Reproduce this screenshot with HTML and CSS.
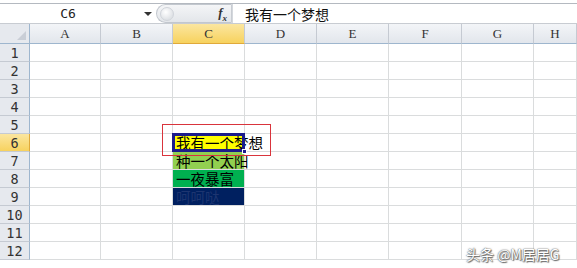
FILE: index.html
```html
<!DOCTYPE html>
<html>
<head>
<meta charset="utf-8">
<link rel="stylesheet" href="styles.css">
</head>
<body>
<div class="app">
  <div class="fbar">
    <div class="namebox"><span class="nb-text">C6</span><span class="arrow"></span></div>
    <div class="pill"><span class="knob"></span><span class="fx">f<sub>x</sub></span></div>
    <div class="formula">我有一个梦想</div>
  </div>
  <div class="sheet">
    <div class="corner"><span class="tri"></span></div>
    <div class="ch">A</div><div class="ch">B</div><div class="ch sel">C</div><div class="ch">D</div><div class="ch">E</div><div class="ch">F</div><div class="ch">G</div><div class="ch">H</div>

    <div class="rh">1</div><div class="c"></div><div class="c"></div><div class="c"></div><div class="c"></div><div class="c"></div><div class="c"></div><div class="c"></div><div class="c"></div>
    <div class="rh">2</div><div class="c"></div><div class="c"></div><div class="c"></div><div class="c"></div><div class="c"></div><div class="c"></div><div class="c"></div><div class="c"></div>
    <div class="rh">3</div><div class="c"></div><div class="c"></div><div class="c"></div><div class="c"></div><div class="c"></div><div class="c"></div><div class="c"></div><div class="c"></div>
    <div class="rh">4</div><div class="c"></div><div class="c"></div><div class="c"></div><div class="c"></div><div class="c"></div><div class="c"></div><div class="c"></div><div class="c"></div>
    <div class="rh">5</div><div class="c"></div><div class="c"></div><div class="c"></div><div class="c"></div><div class="c"></div><div class="c"></div><div class="c"></div><div class="c"></div>
    <div class="rh sel">6</div><div class="c"></div><div class="c"></div><div class="c yellow active"><span class="txt">我有一个梦想</span><span class="handle"></span><span class="redbox"></span></div><div class="c"></div><div class="c"></div><div class="c"></div><div class="c"></div><div class="c"></div>
    <div class="rh">7</div><div class="c"></div><div class="c"></div><div class="c lgreen"><span class="txt">种一个太阳</span></div><div class="c"></div><div class="c"></div><div class="c"></div><div class="c"></div><div class="c"></div>
    <div class="rh">8</div><div class="c"></div><div class="c"></div><div class="c green"><span class="txt">一夜暴富</span></div><div class="c"></div><div class="c"></div><div class="c"></div><div class="c"></div><div class="c"></div>
    <div class="rh">9</div><div class="c"></div><div class="c"></div><div class="c navy"><span class="txt">呵呵哒</span></div><div class="c"></div><div class="c"></div><div class="c"></div><div class="c"></div><div class="c"></div>
    <div class="rh">10</div><div class="c"></div><div class="c"></div><div class="c"></div><div class="c"></div><div class="c"></div><div class="c"></div><div class="c"></div><div class="c"></div>
    <div class="rh">11</div><div class="c"></div><div class="c"></div><div class="c"></div><div class="c"></div><div class="c"></div><div class="c"></div><div class="c"></div><div class="c"></div>
    <div class="rh">12</div><div class="c"></div><div class="c"></div><div class="c"></div><div class="c"></div><div class="c"></div><div class="c"></div><div class="c"></div><div class="c"></div>
  </div>
  <div class="watermark">头条 @M居居G</div>
</div>
</body>
</html>
```
FILE: styles.css
```css
* { box-sizing: border-box; }
html, body { margin: 0; padding: 0; background: #fff; }
body { width: 577px; height: 268px; overflow: hidden; font-family: "Liberation Serif", "Noto Sans CJK SC", serif; }
.app { position: relative; width: 577px; height: 268px; }

.fbar {
  height: 21px;
  margin-top: 3px;
  border-top: 1px solid #b4b9c0;
  border-bottom: 1px solid #c8ccd2;
  display: flex;
  align-items: stretch;
  background: #fff;
}
.namebox {
  width: 156px;
  display: flex;
  align-items: center;
  position: relative;
}
.nb-text {
  flex: 1;
  text-align: center;
  font-family: "DejaVu Sans Mono", monospace;
  font-size: 13px;
  color: #222;
  padding-right: 8px;
}
.arrow {
  width: 0; height: 0;
  border-left: 4px solid transparent;
  border-right: 4px solid transparent;
  border-top: 4px solid #333;
  margin-right: 4px;
}
.pill {
  width: 76px;
  margin: 0;
  border-radius: 10px 0 0 10px;
  background: linear-gradient(#f4f5f7, #e3e6ea);
  border: 1px solid #c2c7ce;
  border-right: 1px solid #c8ccd2;
  display: flex;
  align-items: center;
  justify-content: space-between;
  padding: 0 4px 0 3px;
}
.knob {
  width: 14px; height: 14px;
  border-radius: 50%;
  background: radial-gradient(circle at 40% 35%, #fff, #dfe2e6 70%);
  border: 1px solid #d0d4da;
}
.fx {
  font-family: "Liberation Serif", serif;
  font-style: italic;
  font-weight: bold;
  font-size: 13px;
  color: #333;
}
.fx sub { font-size: 9px; }
.formula {
  flex: 1;
  padding-left: 12px;
  font-family: "Noto Sans CJK SC", sans-serif;
  font-size: 14px;
  color: #111;
  display: flex;
  align-items: center;
  border-left: 1px solid #d4d8dd;
}

.sheet {
  display: grid;
  grid-template-columns: 30px 71px 72px 72px 72px 72px 73px 72px 43px;
  grid-template-rows: 20px repeat(12, 18px);
}
.corner {
  background: #e6e9ee;
  border-right: 1px solid #9eb6ce;
  border-bottom: 1px solid #9eb6ce;
  position: relative;
}
.tri {
  position: absolute; right: 3px; bottom: 3px;
  width: 0; height: 0;
  border-left: 9px solid transparent;
  border-bottom: 9px solid #c9ced6;
}
.ch {
  background: linear-gradient(#f3f5f8, #e2e6ec);
  border-right: 1px solid #c5cad2;
  border-bottom: 1px solid #9eb6ce;
  text-align: center;
  font-family: "Liberation Serif", serif;
  font-size: 13px;
  line-height: 19px;
  color: #333;
}
.ch.sel { background: linear-gradient(#fbe6a0, #f7d25e); border-bottom: 1px solid #e0a93a; }
.rh {
  background: #e6e9ee;
  border-right: 1px solid #9eb6ce;
  border-bottom: 1px solid #c5cad2;
  text-align: center;
  font-family: "DejaVu Sans Mono", monospace;
  font-size: 13.5px;
  line-height: 18px;
  color: #333;
}
.rh.sel { background: linear-gradient(#fbe6a0, #f7d25e); border-right: 1px solid #e0a93a; }
.c {
  border-right: 1px solid #dadcdd;
  border-bottom: 1px solid #dadcdd;
  position: relative;
}
.txt {
  position: absolute;
  left: 3px; top: 0;
  white-space: nowrap;
  font-family: "Noto Sans CJK SC", sans-serif;
  font-size: 14.5px;
  line-height: 17px;
  color: #000;
  z-index: 1;
}
.yellow { background: #ffff00; }
.lgreen { background: #92d050; }
.green { background: #00b050; }
.navy { background: #002060; }
.navy .txt { color: #1d3570; }
.active { z-index: 2; }
.active::after {
  content: "";
  position: absolute;
  left: -1px; top: -1px; right: -1px; bottom: -1px;
  border: 3px solid #1c1c8c;
  z-index: 3;
  pointer-events: none;
}
.handle {
  position: absolute;
  right: -3px; bottom: -3px;
  width: 5px; height: 5px;
  background: #1c1c8c;
  border: 1px solid #fff;
  z-index: 4;
}
.redbox {
  position: absolute;
  left: -11px; top: -10px;
  width: 109px; height: 32px;
  border: 1px solid #d9343c;
  z-index: 5;
}

.watermark {
  position: absolute;
  left: 466px; top: 242px;
  font-family: "Noto Sans CJK SC", sans-serif;
  font-size: 14px;
  line-height: 18px;
  color: #fff;
  text-shadow: 0 0 1px #555, 0 0 2px #777, 1px 1px 1px #666;
}
```
